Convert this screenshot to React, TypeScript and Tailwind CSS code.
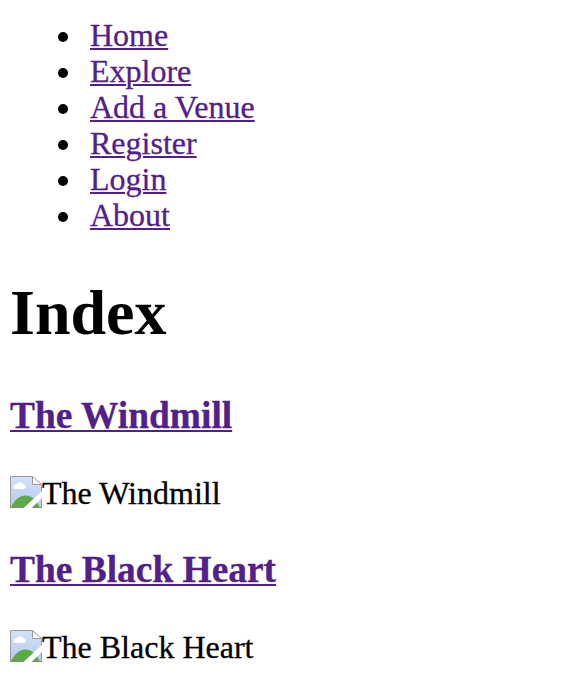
const links = ["Home", "Explore", "Add a Venue", "Register", "Login", "About"];
const venues = ["The Windmill", "The Black Heart"];

function BrokenImage() {
  return (
    <svg width="32" height="32" viewBox="0 0 32 32" className="block shrink-0" aria-hidden="true">
      <defs>
        <linearGradient id="sky" x1="0" y1="0" x2="0" y2="1">
          <stop offset="0" stopColor="#d3e2fa" />
          <stop offset="1" stopColor="#b6c9ee" />
        </linearGradient>
      </defs>
      <path d="M.5.5H22.5L31.5 9.5V31.5H.5Z" fill="url(#sky)" stroke="#999" />
      <path d="M4.8 13A2.4 2.4 0 0 1 5.1 8.5C5.8 8.4 6.4 8.5 6.7 8A3.9 3.9 0 0 1 13.8 8.5A2.3 2.3 0 0 1 14.2 13Z" fill="#fff" />
      <path d="M1 31C4 25 9 19.5 15.5 19.5S27 25 29.5 31Z" fill="#5bab45" />
      <path d="M0 31.5H32" stroke="#888" />
      <path d="M13.5 32L32 15V22L21.5 32Z" fill="#fff" />
      <path d="M22.5.5V8.5H31.5Z" fill="#fff" stroke="#999" />
    </svg>
  );
}

export default function App() {
  return (
    <main className="h-[694px] w-[566px] overflow-hidden bg-white px-[10px] pt-[17px] font-['Liberation_Serif','Times_New_Roman',serif] text-[32px] leading-9 text-black">
      <ul className="pl-12">
        {links.map((label) => (
          <li key={label} className="flex items-center">
            <span className="mt-1 mr-[22px] size-[10px] rounded-full bg-black" />
            <a href="#" className="text-[#52208a] underline decoration-2 underline-offset-2 [-webkit-text-stroke:0.3px]">{label}</a>
          </li>
        ))}
      </ul>
      <h1 className="mt-[43px] text-[64px] leading-[73px] font-bold">Index</h1>
      {venues.map((name, index) => (
        <section key={name} className={index === 0 ? "mt-[46px]" : "mt-[36px]"}>
          <h3 className="text-[37.44px] leading-[41px] font-bold">
            <a href="#" className="text-[#52208a] underline decoration-2 underline-offset-2 [-webkit-text-stroke:0.3px]">{name}</a>
          </h3>
          <div className="mt-[40px] flex h-[37px] items-start">
            <BrokenImage />
            <span className="-mt-px [-webkit-text-stroke:0.3px]">{name}</span>
          </div>
        </section>
      ))}
    </main>
  );
}
